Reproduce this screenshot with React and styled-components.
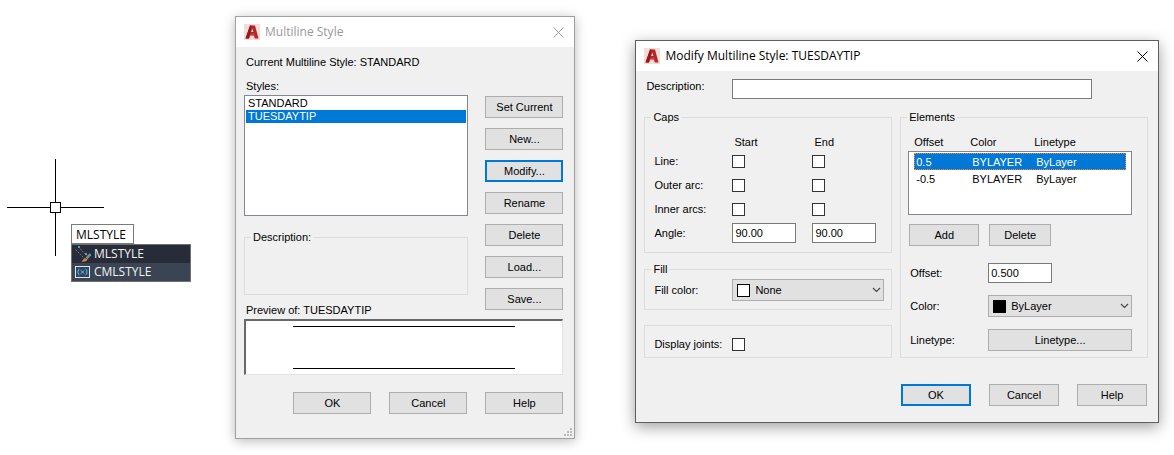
import React, { useState } from 'react';
import styled, { createGlobalStyle, css } from 'styled-components';

const palette = {
  white: '#ffffff',
  black: '#000000',
  face: '#f0f0f0',
  button: '#e1e1e1',
  buttonBorder: '#adadad',
  group: '#dcdcdc',
  field: '#7a7a7a',
  list: '#828790',
  blue: '#0078d7',
  gray: '#999999',
};

const GlobalStyle = createGlobalStyle`
  * {
    box-sizing: border-box;
  }

  body {
    margin: 0;
    background: ${palette.white};
    color: ${palette.black};
    font-family: 'Liberation Sans', Arial, sans-serif;
    font-size: 11px;
    line-height: 14px;
  }

  button, input, select {
    margin: 0;
    color: inherit;
    font: inherit;
  }
`;

const Page = styled.main`
  display: flex;
  align-items: flex-start;
  padding: 16px 15px 16px 0;
  overflow: hidden;
`;

/* ---------- drawing area ---------- */

const Drawing = styled.section`
  position: relative;
  flex: 0 0 235px;
  align-self: stretch;
`;

const Crosshair = styled.svg`
  position: absolute;
  top: 143px;
  left: 7px;
`;

const CommandPrompt = styled.div`
  position: absolute;
  top: 208px;
  left: 71px;
  width: 120px;
  font-family: 'Open Sans', 'Noto Sans', sans-serif;
  font-size: 12px;
`;

const CommandInput = styled.input`
  display: block;
  width: 63px;
  height: 20px;
  padding: 0 4px;
  border: 1px solid ${palette.field};
  border-radius: 0;
  background: ${palette.white};
  outline: none;
`;

const Suggestions = styled.ul`
  margin: 0;
  padding: 0;
  border: 1px solid #6e7278;
  list-style: none;
`;

const Suggestion = styled.li`
  display: flex;
  align-items: center;
  gap: 3px;
  height: 18px;
  padding-left: 3px;
  background: ${({ $active }) => ($active ? '#272c38' : '#3b4453')};
  color: #f0f2f4;
`;

/* ---------- dialog frame ---------- */

const Window = styled.section`
  flex: ${({ $grow }) => $grow} 1 0;
  min-width: 0;
  margin: ${({ $margin }) => $margin || 0};
  border: 1px solid ${({ $active }) => ($active ? '#5e5e5e' : '#a0a0a0')};
  background: ${palette.face};
  box-shadow: ${({ $active }) =>
    $active ? '0 4px 14px rgba(0, 0, 0, 0.38)' : '0 2px 11px rgba(0, 0, 0, 0.28)'};
`;

const TitleBar = styled.header`
  display: flex;
  align-items: center;
  height: 30px;
  padding: 0 10px 0 8px;
  background: ${palette.white};
  color: ${({ $active }) => ($active ? palette.black : palette.gray)};
`;

const WindowTitle = styled.h1`
  flex: 1;
  margin: 0 0 0 5px;
  font-family: 'Open Sans', 'Noto Sans', sans-serif;
  font-size: 12px;
  font-weight: normal;
`;

const CloseButton = styled.button`
  display: flex;
  padding: 0;
  border: 0;
  background: none;
`;

/* ---------- shared controls ---------- */

const Button = styled.button`
  width: ${({ $width }) => $width || '78px'};
  height: 22px;
  padding: 0;
  border: 1px solid ${palette.buttonBorder};
  border-radius: 0;
  background: ${palette.button};
  text-align: center;

  ${({ $focused }) =>
    $focused &&
    css`
      border: 2px solid ${palette.blue};
    `}
`;

const Group = styled.fieldset`
  min-width: 0;
  margin: 0;
  padding: 0;
  border: 1px solid ${palette.group};
`;

const Legend = styled.legend`
  margin-left: 6px;
  padding: 0 2px;
`;

const TextInput = styled.input`
  width: ${({ $width }) => $width || '64px'};
  height: 20px;
  padding: 0 2px;
  border: 1px solid ${palette.field};
  border-radius: 0;
  background: ${palette.white};
`;

const CheckBox = styled.input`
  appearance: none;
  width: 13px;
  height: 13px;
  border: 1px solid #333333;
  background: ${palette.white};
`;

const ColorSelectBox = styled.div`
  position: relative;
  flex: 1;

  &::before {
    content: '';
    position: absolute;
    top: 5px;
    left: 5px;
    width: 11px;
    height: 11px;
    border: 1px solid ${palette.black};
    background: ${({ $swatch }) => $swatch};
  }

  svg {
    position: absolute;
    top: 8px;
    right: 3px;
    pointer-events: none;
  }
`;

const Select = styled.select`
  appearance: none;
  display: block;
  width: 100%;
  height: 22px;
  padding: 0 16px 0 22px;
  border: 1px solid ${palette.buttonBorder};
  border-radius: 0;
  background: ${palette.button};
`;

/* ---------- Multiline Style ---------- */

const StyleBody = styled.div`
  padding: 8px 11px 24px 8px;
`;

const Caption = styled.p`
  margin: 0;
  padding: 0 2px;
`;

const StyleColumns = styled.div`
  display: flex;
  gap: 17px;
  margin: 10px 0 2px;
`;

const StyleMain = styled.div`
  flex: 1;
  min-width: 0;
`;

const StyleList = styled.ul`
  height: 121px;
  margin: 2px 0 14px;
  padding: 1px;
  border: 1px solid ${palette.list};
  background: ${palette.white};
  list-style: none;
`;

const StyleItem = styled.li`
  height: 13px;
  padding: 0 2px;
  line-height: 13px;
  cursor: default;

  ${({ $selected }) =>
    $selected &&
    css`
      background: ${palette.blue};
      color: ${palette.white};
    `}
`;

const StyleGroup = styled(Group)`
  height: 65px;
  margin-bottom: 8px;
`;

const StyleButtons = styled.div`
  display: flex;
  flex-direction: column;
  gap: 10px;
  padding-top: 17px;
`;

const Preview = styled.div`
  display: flex;
  flex-direction: column;
  justify-content: space-between;
  align-items: center;
  height: 56px;
  margin-bottom: 17px;
  padding: 5px 0 5px;
  border: 2px solid #696969;
  border-right: 1px solid #e3e3e3;
  border-bottom: 1px solid #e3e3e3;
  background: ${palette.white};
`;

const PreviewLine = styled.div`
  width: 70%;
  height: 1px;
  background: ${palette.black};
`;

const Footer = styled.footer`
  display: flex;
  justify-content: flex-end;
  gap: 18px;
`;

const GripCorner = styled.div`
  display: flex;
  justify-content: flex-end;
  height: 0;
  padding-right: 2px;

  svg {
    margin-top: -10px;
  }
`;

/* ---------- Modify Multiline Style ---------- */

const ModifyBody = styled.div`
  padding: 8px 10px 16px 8px;

  ${Footer} {
    padding-right: 1px;
  }
`;

const DescriptionRow = styled.div`
  display: flex;
  padding: 0 56px 0 2px;

  label {
    flex: 0 0 86px;
  }
`;

const ModifyColumns = styled.div`
  display: flex;
  gap: 8px;
  margin: 11px 0 26px;
`;

const Column = styled.div`
  display: flex;
  flex-direction: column;
  flex: 1 1 0;
  min-width: 0;
`;

const CapsGrid = styled.div`
  display: grid;
  grid-template-columns: 78px 80px 1fr;
  grid-template-rows: 14px repeat(4, 24px);
  align-items: center;
  padding: 11px 9px 7px;
`;

const CapsHead = styled.span`
  padding-left: 2px;
`;

const FieldRow = styled.div`
  display: flex;
  align-items: center;

  label {
    flex: 0 0 78px;
  }
`;

const FillGroup = styled(Group)`
  margin: 9px 0 15px;

  ${FieldRow} {
    padding: 3px 7px 8px 9px;
  }
`;

const JointsGroup = styled(Group)`
  padding: 11px 9px 6px;
`;

const ElementsGroup = styled(Group)`
  height: 248px;
`;

const ElementsTable = styled.table`
  display: block;
  padding: 11px 15px 9px 7px;

  thead,
  tbody {
    display: block;
  }

  thead {
    padding: 0 6px 2px;
  }

  tbody {
    height: 64px;
    padding: 1px 5px;
    border: 1px solid ${palette.list};
    background: ${palette.white};
  }

  th,
  td {
    padding: 0;
    font-weight: normal;
    text-align: left;
  }
`;

const ElementRow = styled.tr`
  display: grid;
  grid-template-columns: 56px 64px 1fr;

  td {
    padding: 2px 2px 1px;
  }

  ${({ $selected }) =>
    $selected &&
    css`
      outline: 1px dotted #ff8728;
      outline-offset: -1px;
      background: ${palette.blue};
      color: ${palette.white};
    `}
`;

const ElementButtons = styled.div`
  display: flex;
  gap: 10px;
  padding: 0 8px;
`;

const ElementFields = styled.div`
  display: grid;
  gap: 12px;
  padding: 17px 15px 0 9px;
`;

const AutocadLogo = () => (
  <svg width="16" height="16" viewBox="0 0 16 16" aria-hidden="true">
    <rect width="16" height="16" fill="#f7dcd5" />
    <path d="M1.5 14.500 6 1.500h5L14.500 14.500h-3.700l-.9-3H6.200l-1.200 3z" fill="#b3262c" />
    <path d="M1.5 14.500 6 1.500h1.700L5 14.500z" fill="#8f1a20" />
    <path d="M7.200 8 8.300 4.600 9.400 8z" fill="#f7dcd5" />
    <path d="m5.600 11 4.500-2.200.7 2.500z" fill="#d2373c" />
  </svg>
);

const CloseIcon = () => (
  <svg width="11" height="11" viewBox="0 0 11 11" aria-hidden="true">
    <path d="M.5.5l10 10M10.500.5l-10 10" fill="none" stroke="currentColor" />
  </svg>
);

const Chevron = () => (
  <svg width="9" height="6" viewBox="0 0 9 6" aria-hidden="true">
    <path d="M1 1l3.500 3.500L8 1" fill="none" stroke="#444444" strokeWidth="1.1" />
  </svg>
);

const StyleCommandIcon = () => (
  <svg width="16" height="16" viewBox="0 0 16 16" aria-hidden="true">
    <path d="M.5 3.500l8.500 8.500M5 2.500l6.500 7" stroke="#8d6c70" strokeDasharray="2 1" />
    <path d="M3 0h2v2H3zM10 7h2v2h-2z" fill="#36a9e0" />
    <path d="M15.500 8l-4 4.500" stroke="#7f8da0" strokeWidth="2.500" />
    <path d="M6.500 15.500c1.500-.5 1.500-3 3.500-3.500l2.500 1.500c-.8 2-3.500 2.500-6 2z" fill="#c78a3c" />
  </svg>
);

const VariableIcon = () => (
  <svg width="16" height="12" viewBox="0 0 16 12" aria-hidden="true">
    <rect x=".5" y=".5" width="14" height="11" fill="#2b4661" stroke="#dfe6ec" />
    <path
      d="M4.500 3Q3 3 3 6t1.500 3M10.500 3Q12 3 12 6t-1.500 3M5.500 4.200l4 3.600M9.500 4.200l-4 3.600"
      fill="none"
      stroke="#6db9e8"
    />
  </svg>
);

const SizeGrip = () => (
  <svg width="8" height="8" viewBox="0 0 8 8" fill="#b8b8b8" aria-hidden="true">
    <path d="M6 0h2v2H6zM3 3h2v2H3zM6 3h2v2H6zM0 6h2v2H0zM3 6h2v2H3zM6 6h2v2H6z" />
  </svg>
);

const Dialog = ({ title, active, grow, margin, children }) => (
  <Window $active={active} $grow={grow} $margin={margin} role="dialog" aria-label={title}>
    <TitleBar $active={active}>
      <AutocadLogo />
      <WindowTitle>{title}</WindowTitle>
      <CloseButton aria-label="Close">
        <CloseIcon />
      </CloseButton>
    </TitleBar>
    {children}
  </Window>
);

const ColorSelect = ({ id, swatch, options }) => (
  <ColorSelectBox $swatch={swatch}>
    <Select id={id}>
      {options.map((option) => (
        <option key={option}>{option}</option>
      ))}
    </Select>
    <Chevron />
  </ColorSelectBox>
);

const styles = ['STANDARD', 'TUESDAYTIP'];
const styleActions = ['Set Current', 'New...', 'Modify...', 'Rename', 'Delete', 'Load...', 'Save...'];
const caps = ['Line:', 'Outer arc:', 'Inner arcs:'];
const elements = [
  { offset: '0.5', color: 'BYLAYER', linetype: 'ByLayer' },
  { offset: '-0.5', color: 'BYLAYER', linetype: 'ByLayer' },
];

function CommandLine() {
  return (
    <Drawing>
      <Crosshair width="97" height="97" viewBox="0 0 97 97" aria-hidden="true">
        <path d="M0 48.500h43M54 48.500h43M48.500 0v43M48.500 54v43" stroke="#000000" />
        <rect x="43.500" y="43.500" width="10" height="10" fill="none" stroke="#000000" />
      </Crosshair>
      <CommandPrompt>
        <CommandInput aria-label="Command" defaultValue="MLSTYLE" />
        <Suggestions>
          <Suggestion $active>
            <StyleCommandIcon />
            MLSTYLE
          </Suggestion>
          <Suggestion>
            <VariableIcon />
            CMLSTYLE
          </Suggestion>
        </Suggestions>
      </CommandPrompt>
    </Drawing>
  );
}

function MultilineStyle() {
  const [selected, setSelected] = useState('TUESDAYTIP');

  return (
    <Dialog title="Multiline Style" grow={340}>
      <StyleBody>
        <Caption>Current Multiline Style: STANDARD</Caption>
        <StyleColumns>
          <StyleMain>
            <Caption id="styles">Styles:</Caption>
            <StyleList role="listbox" aria-labelledby="styles">
              {styles.map((style) => (
                <StyleItem
                  key={style}
                  role="option"
                  aria-selected={style === selected}
                  $selected={style === selected}
                  onClick={() => setSelected(style)}
                >
                  {style}
                </StyleItem>
              ))}
            </StyleList>
            <StyleGroup>
              <Legend>Description:</Legend>
            </StyleGroup>
            <Caption>Preview of: {selected}</Caption>
          </StyleMain>
          <StyleButtons>
            {styleActions.map((action) => (
              <Button key={action} $focused={action === 'Modify...'}>
                {action}
              </Button>
            ))}
          </StyleButtons>
        </StyleColumns>
        <Preview>
          <PreviewLine />
          <PreviewLine />
        </Preview>
        <Footer>
          <Button>OK</Button>
          <Button>Cancel</Button>
          <Button>Help</Button>
        </Footer>
      </StyleBody>
      <GripCorner>
        <SizeGrip />
      </GripCorner>
    </Dialog>
  );
}

function ModifyMultilineStyle() {
  const [selected, setSelected] = useState(0);

  return (
    <Dialog title="Modify Multiline Style: TUESDAYTIP" active grow={524} margin="24px 0 0 60px">
      <ModifyBody>
        <DescriptionRow>
          <label htmlFor="description">Description:</label>
          <TextInput id="description" $width="100%" />
        </DescriptionRow>
        <ModifyColumns>
          <Column>
            <Group>
              <Legend>Caps</Legend>
              <CapsGrid>
                <span />
                <CapsHead>Start</CapsHead>
                <CapsHead>End</CapsHead>
                {caps.map((cap) => (
                  <React.Fragment key={cap}>
                    <label htmlFor={cap}>{cap}</label>
                    <CheckBox type="checkbox" id={cap} />
                    <CheckBox type="checkbox" aria-label={`${cap} End`} />
                  </React.Fragment>
                ))}
                <label htmlFor="angle">Angle:</label>
                <TextInput id="angle" defaultValue="90.00" />
                <TextInput aria-label="End angle" defaultValue="90.00" />
              </CapsGrid>
            </Group>
            <FillGroup>
              <Legend>Fill</Legend>
              <FieldRow>
                <label htmlFor="fill">Fill color:</label>
                <ColorSelect id="fill" swatch={palette.white} options={['None', 'ByLayer', 'ByBlock']} />
              </FieldRow>
            </FillGroup>
            <JointsGroup>
              <FieldRow>
                <label htmlFor="joints">Display joints:</label>
                <CheckBox type="checkbox" id="joints" />
              </FieldRow>
            </JointsGroup>
          </Column>
          <Column>
            <ElementsGroup>
              <Legend>Elements</Legend>
              <ElementsTable>
                <thead>
                  <ElementRow>
                    <th>Offset</th>
                    <th>Color</th>
                    <th>Linetype</th>
                  </ElementRow>
                </thead>
                <tbody>
                  {elements.map((element, index) => (
                    <ElementRow
                      key={element.offset}
                      $selected={index === selected}
                      onClick={() => setSelected(index)}
                    >
                      <td>{element.offset}</td>
                      <td>{element.color}</td>
                      <td>{element.linetype}</td>
                    </ElementRow>
                  ))}
                </tbody>
              </ElementsTable>
              <ElementButtons>
                <Button $width="70px">Add</Button>
                <Button $width="62px">Delete</Button>
              </ElementButtons>
              <ElementFields>
                <FieldRow>
                  <label htmlFor="offset">Offset:</label>
                  <TextInput id="offset" defaultValue="0.500" />
                </FieldRow>
                <FieldRow>
                  <label htmlFor="color">Color:</label>
                  <ColorSelect id="color" swatch={palette.black} options={['ByLayer', 'ByBlock']} />
                </FieldRow>
                <FieldRow>
                  <label htmlFor="linetype">Linetype:</label>
                  <Button id="linetype" $width="100%">
                    Linetype...
                  </Button>
                </FieldRow>
              </ElementFields>
            </ElementsGroup>
          </Column>
        </ModifyColumns>
        <Footer>
          <Button $width="70px" $focused>
            OK
          </Button>
          <Button $width="70px">Cancel</Button>
          <Button $width="70px">Help</Button>
        </Footer>
      </ModifyBody>
    </Dialog>
  );
}

export default function App() {
  return (
    <>
      <GlobalStyle />
      <Page>
        <CommandLine />
        <MultilineStyle />
        <ModifyMultilineStyle />
      </Page>
    </>
  );
}
